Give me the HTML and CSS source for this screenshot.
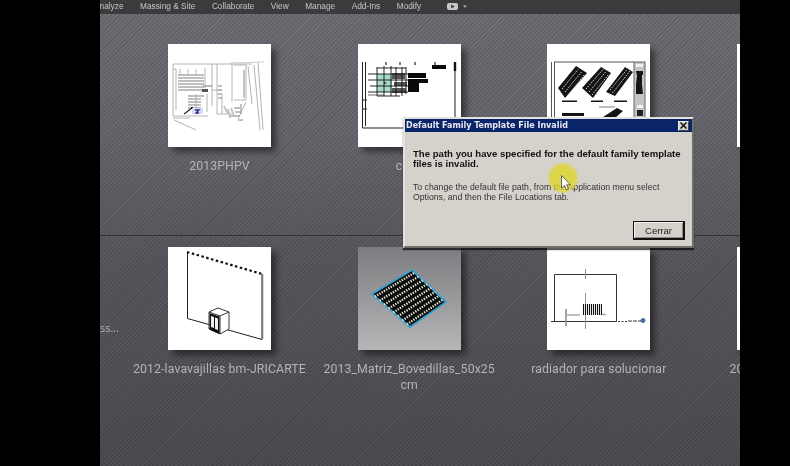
FILE: index.html
```html
<!DOCTYPE html>
<html lang="en">
<head>
<meta charset="utf-8">
<title>Default Family Template File Invalid</title>
<link rel="stylesheet" href="styles.css">
</head>
<body>
<div class="app">
  <nav class="menu">
    <span>Analyze</span><span>Massing &amp; Site</span><span>Collaborate</span><span>View</span><span>Manage</span><span>Add-Ins</span><span>Modify</span>
    <span class="menu-extra">
      <svg class="video-icon" width="11" height="7" viewBox="0 0 11 7"><rect width="11" height="7" rx="2" fill="#c8c8c8"/><path d="M4 1.600 8 3.500 4 5.400z" fill="#444"/></svg>
      <svg class="caret" width="4" height="3" viewBox="0 0 4 3"><path d="M0 .5h4L2 2.800z" fill="#b5b5b5"/></svg>
    </span>
  </nav>

  <section class="row row-top">
    <div class="stub"></div>
    <figure class="card">
      <svg class="thumb" viewBox="0 0 103 103">
        <g fill="none" stroke="#b4b4b4" stroke-width="1">
          <path d="M5 20H84M5 20V72H40M5 25H8V66M44 20V62M49 20V70H64M64 20V58M66 21H78V56H66M78 58 70 75M80 22 84 60M86 21 92 86M90 18 95 86M5 74H22M6 76 28 86"/>
          <path d="M12 30V25M20 30V25M28 30V25M37 24V44M39 50V68M28 50V68M44 46H54M54 50V70"/>
        </g>
        <g stroke="#ababab" stroke-width="1.400">
          <path d="M10 31H36M10 34H36M10 37H36M10 40H36M10 43H36M10 46H36M20 52H33M20 55H33M20 58H33M20 61H33M20 64H33M50 42H54M50 46H54M50 50H54M50 54H54M67 68H74M66 64H72M62 72H72M70 76H75M73 60V70M76 26V54"/>
        </g>
        <g stroke="#c4c4c4" stroke-width="2"><path d="M56 62 60 70M60 65 62 74M63 64 66 72"/></g>
        <path d="M33 52H36M35 42H44" stroke="#777" stroke-width="1" fill="none"/>
        <path d="M16 70 24 64" stroke="#222" stroke-width="1.200"/>
        <rect x="23" y="63" width="2" height="2" fill="#111"/>
        <rect x="24" y="64" width="11" height="6" fill="#dcdcf0"/>
        <path d="M27 66H31L28 69H31" stroke="#223088" stroke-width="1.300" fill="none"/>
        <path d="M34 45H40V48H34z" fill="#555"/>
        <path d="M62 19 96 18" stroke="#ccc" stroke-width="1"/>
      </svg>
      <figcaption class="caption">2013PHPV</figcaption>
    </figure>
    <figure class="card">
      <svg class="thumb" viewBox="0 0 103 103">
        <path d="M4.500 18V84H46M7.500 18V82M97 18V90" fill="none" stroke="#222" stroke-width="1"/>
        <path d="M97 18V27" stroke="#111" stroke-width="2.400"/>
        <path d="M4 56H9M4 65H9M28 18V21M42 18V21M57 18V21M77 18V21" stroke="#222" stroke-width="1.200"/>
        <rect x="19" y="30" width="15" height="18" fill="#a9dccb"/>
        <g fill="none" stroke="#111" stroke-width=".9">
          <path d="M10 30H50M10 36H50M12 42H50M10 48H50M19 24H48M19 52H42M19 23V52M26 22V52M33 22V52M38 23V52M44 23V52M48 23V50"/>
        </g>
        <path d="M34 29H47V35H34zM36 38H49V42H36zM34 44H48V49H34z" fill="#111" fill-opacity=".7"/>
        <path d="M26 38 29 39 26 40z" fill="#111"/>
        <path d="M10 51H26" stroke="#444" stroke-width=".8"/>
        <path d="M50 29H68V34H50zM50 35H70V39H50zM50 39H61V48H50zM74 21H88V25H74z" fill="#0a0a0a"/>
      </svg>
      <figcaption class="caption">casa</figcaption>
    </figure>
    <figure class="card">
      <svg class="thumb" viewBox="0 0 103 103">
        <path d="M4.500 18V90M7.500 18V90M7 18H87" fill="none" stroke="#555" stroke-width="1"/>
        <rect x="87" y="18" width="11" height="70" fill="#c4c4c4" stroke="#666"/>
        <rect x="89" y="20" width="7" height="3" fill="#eee"/>
        <path d="M89 27H96V31H95V41L96 50H89V40L90 32Z" fill="#151515"/>
        <rect x="90" y="61" width="6" height="3" fill="#f0f0f0"/>
        <path d="M90 66H96V72H90z" fill="#222"/>
        <g fill="#141414">
          <path d="M11 44 29 22 40 29 18 54z"/><path d="M35 44 54 23 64 29 46 54z"/><path d="M59 48 78 23 86 28 68 52z"/>
          <path d="M15 56.500H30V58H15zM44 56.500H56V58H44zM67 56.500H80V58H67zM15 69H37V72H15zM56 73 70 64 76 67 68 74z"/>
        </g>
        <g fill="none" stroke="#ddd" stroke-width="1" stroke-dasharray="1.500 1.200">
          <path d="M15 45 31 25.500M18 48 34.500 28M21 51 38 30M39 45 56 25.500M42 48 59 27.500M45 51 62 30M63 46 80 25.500M65.500 49 83 27"/>
        </g>
        <path d="M52 63H68" stroke="#aaa" stroke-width="1.500"/>
      </svg>
      <figcaption class="caption"></figcaption>
    </figure>
    <figure class="card">
      <div class="thumb"></div>
    </figure>
  </section>

  <section class="row row-bottom">
    <div class="stub"><span class="stub-text">ss...</span></div>
    <figure class="card">
      <svg class="thumb" viewBox="0 0 103 103">
        <path d="M19.500 6V71.500L94 92.500V27" fill="none" stroke="#222" stroke-width="1"/>
        <path d="M94.500 27V92" stroke="#777" stroke-width="1.500"/>
        <path d="M19 5 94 27" fill="none" stroke="#111" stroke-width="2.200" stroke-dasharray="2.500 2.500"/>
        <path d="M41 65 50 61 61 65V82L52 87 41 82z" fill="#fff" stroke="#222" stroke-width=".9"/>
        <path d="M41 65 52 69V87M52 69 61 65" fill="none" stroke="#222" stroke-width=".9"/>
        <path d="M41.500 66 51.500 69.500V87L41.500 82.500z" fill="#111"/>
        <path d="M43 69 46 70V81L43 80zM47 70.500 50 71.500V83L47 82z" fill="#eee"/>
      </svg>
      <figcaption class="caption">2012-lavavajillas bm-JRICARTE</figcaption>
    </figure>
    <figure class="card">
      <svg class="thumb" viewBox="0 0 103 103">
        <defs><linearGradient id="matriz-bg" x1="0" y1="0" x2="0" y2="1"><stop offset="0" stop-color="#7d7c80"/><stop offset="1" stop-color="#b6b6b7"/></linearGradient></defs>
        <rect width="103" height="103" fill="url(#matriz-bg)"/>
        <path d="M54 23 88 55 52 80 14 47z" fill="#0c0c0c" stroke="#3a9fcb" stroke-width="2"/>
        <g stroke="#eeeedd" stroke-width="2.300" stroke-dasharray="1.300 1.300" fill="none">
          <path d="M17 49.600 56.700 25.600M21.600 53.600 60.800 29.400M26.200 57.600 64.900 33.200M30.700 61.500 69 37.100M35.300 65.500 73 40.900M39.800 69.400 77.100 44.800M44.400 73.400 81.200 48.600M49 77.400 85.300 52.400"/>
        </g>
      </svg>
      <figcaption class="caption">2013_Matriz_Bovedillas_50x25 cm</figcaption>
    </figure>
    <figure class="card">
      <svg class="thumb" viewBox="0 0 103 103">
        <path d="M4 74.500H69.500V27.500H7.500V74.500" fill="none" stroke="#333" stroke-width="1"/>
        <path d="M38.500 22V32M38.500 46V82" stroke="#8a9a90" stroke-width="1"/>
        <path d="M20 68H33M55 67.500H59" stroke="#aaa" stroke-width="1.500"/>
        <path d="M19 62V79" stroke="#888" stroke-width="1.500"/>
        <rect x="36" y="57" width="19" height="11" fill="#e8e8e8"/>
        <path d="M36.500 57V68M38.500 57V68M40.500 57V68M42.500 57V68M44.500 57V68M46.500 57V68M48.500 57V68M50.500 57V68M52.500 57V68M54.500 57V68" stroke="#111" stroke-width="1"/>
        <path d="M71 74.500H80" stroke="#222" stroke-width=".9" stroke-dasharray="2 1.500"/>
        <path d="M81 74H94" stroke="#222" stroke-width=".9" stroke-dasharray="4 1"/>
        <circle cx="96" cy="73.500" r="2" fill="#4a78b0" stroke="#1c3c78" stroke-width=".7"/>
      </svg>
      <figcaption class="caption">radiador para solucionar</figcaption>
    </figure>
    <figure class="card">
      <div class="thumb"></div>
      <figcaption class="caption">2013_Cubierta_Metal</figcaption>
    </figure>
  </section>

  <div class="dialog" role="dialog">
    <header class="titlebar">
      <span>Default Family Template File Invalid</span>
      <span class="close"><svg width="7" height="7" viewBox="0 0 7 7"><path d="M.5.500 6.500 6.500M6.500.500 .5 6.500" stroke="#111" stroke-width="1.500"/></svg></span>
    </header>
    <div class="dialog-body">
      <p class="msg-strong">The path you have specified for the default family template files is invalid.</p>
      <p class="msg">To change the default file path, from the Application menu select Options, and then the File Locations tab.</p>
      <div class="actions"><button class="btn">Cerrar</button></div>
    </div>
    <div class="cursor-halo"></div>
    <svg class="cursor" width="11" height="16" viewBox="0 0 11 16"><path d="M.5.500V13L3.500 10.500 5.500 15 7.500 14 5.500 9.800H9.500Z" fill="#fff" stroke="#444" stroke-width=".8"/></svg>
  </div>
</div>
</body>
</html>
```

FILE: styles.css
```css
* { box-sizing: border-box; }

html, body {
  margin: 0;
  height: 100%;
  background: #000;
  overflow: hidden;
}

.app {
  position: relative;
  width: 640px;
  height: 466px;
  margin-left: 100px;
  overflow: hidden;
  filter: blur(0.3px);
  font-family: "Open Sans", "Liberation Sans", sans-serif;
  background:
    repeating-linear-gradient(135deg, rgba(0, 0, 0, 0.1) 0 1.5px, rgba(255, 255, 255, 0.02) 1.5px 3px),
    linear-gradient(180deg, #706e75 0, #66656c 30%, #57575d 55%, #4b4b51 100%);
}

.menu {
  display: flex;
  align-items: center;
  gap: 16.5px;
  height: 14px;
  padding-bottom: 2px;
  margin-left: -6px;
  width: 660px;
  background: #3b3b3d;
  color: #c6c6c6;
  font-family: "Liberation Sans", sans-serif;
  font-size: 8.3px;
  white-space: nowrap;
}

.menu-extra {
  display: flex;
  align-items: center;
  gap: 5px;
  margin-left: 9px;
}

.row {
  display: grid;
  grid-template-columns: 24.67px repeat(4, 189.67px);
  align-items: start;
}

.row-top {
  height: 222px;
  padding-top: 30px;
  border-bottom: 1px solid #343437;
}

.row-bottom {
  padding-top: 11px;
}

.stub {
  position: relative;
  height: 90px;
  padding-top: 73px;
  font-size: 11px;
  color: #b5b5b7;
  white-space: nowrap;
}

.card {
  margin: 0;
  display: flex;
  flex-direction: column;
  align-items: center;
}

.thumb {
  display: block;
  flex: none;
  width: 103px;
  height: 103px;
  background: #fff;
  box-shadow: 5px 5px 6px rgba(0, 0, 0, 0.45);
}

.caption {
  margin-top: 11px;
  width: 186px;
  font-family: Roboto, "Open Sans", sans-serif;
  font-size: 12.3px;
  line-height: 16px;
  color: #b4b4b6;
  text-align: center;
  letter-spacing: 0.1px;
}

.dialog {
  position: absolute;
  left: 303px;
  top: 117px;
  width: 291px;
  height: 131px;
  background: #d5d2cb;
  border: 2px solid;
  border-color: #e4e2dc #6f6e6a #6f6e6a #e4e2dc;
  box-shadow: 0 2px 1px rgba(0, 0, 0, 0.65);
  font-family: "DejaVu Sans", sans-serif;
  color: #111;
}

.titlebar {
  display: flex;
  align-items: center;
  justify-content: space-between;
  height: 13px;
  padding: 0 3px 0 1px;
  background: #0a246a;
  color: #e8e8f0;
  font-size: 8px;
  font-weight: 700;
  white-space: nowrap;
}

.close {
  display: flex;
  align-items: center;
  justify-content: center;
  width: 11px;
  height: 10px;
  background: #d5d2cb;
  border: 1px solid #eee;
  border-right-color: #444;
  border-bottom-color: #444;
}

.dialog-body {
  padding: 17px 7px 0 8px;
}

.msg-strong {
  margin: 0;
  font-family: "Liberation Sans", sans-serif;
  font-size: 9.6px;
  font-weight: 700;
  line-height: 10px;
  color: #111;
}

.msg {
  margin: 13px 0 0;
  font-family: "Liberation Sans", sans-serif;
  font-size: 8.7px;
  line-height: 10px;
  color: #333;
}

.actions {
  display: flex;
  justify-content: flex-end;
  margin-top: 19px;
}

.btn {
  width: 52px;
  height: 19px;
  padding: 0;
  background: #d5d2cb;
  border: 1px solid #111;
  border-right-width: 2px;
  border-bottom-width: 2px;
  box-shadow: inset 1px 1px 0 #f4f3ef, inset -1px -1px 0 #8c8a84;
  font-family: "Liberation Sans", sans-serif;
  font-size: 9.5px;
  color: #222;
}

.cursor-halo {
  position: absolute;
  left: 143px;
  top: 44px;
  width: 30px;
  height: 30px;
  border-radius: 50%;
  background: radial-gradient(circle, rgba(222, 214, 50, 0.85) 0 50%, rgba(222, 214, 50, 0.1) 100%);
}

.cursor {
  position: absolute;
  left: 156px;
  top: 56px;
}
```
